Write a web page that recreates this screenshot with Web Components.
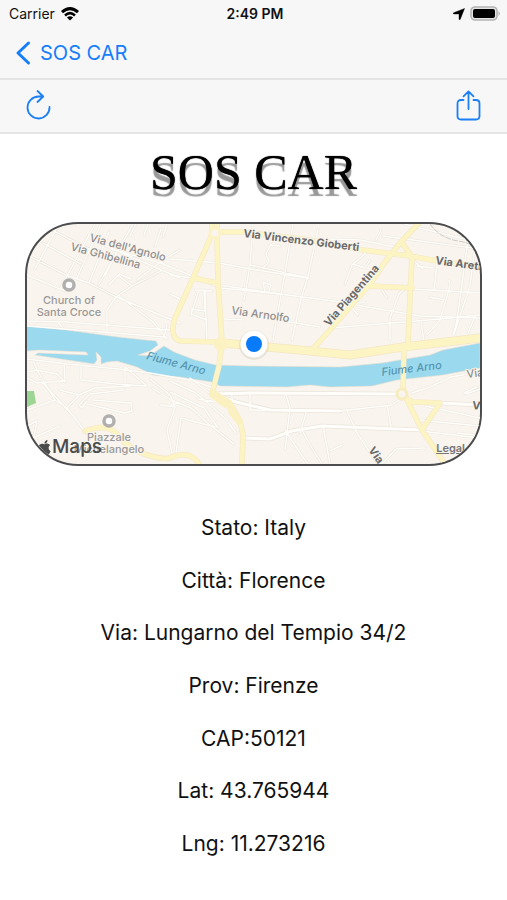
<!DOCTYPE html>
<html lang="it">
<head>
<meta charset="utf-8">
<meta name="viewport" content="width=device-width, initial-scale=1">
<title>SOS CAR</title>
<style>
  body { margin: 0; background: #fff; color: #111; font-family: Inter, "Liberation Sans", sans-serif; }
</style>
</head>
<body>
<sos-app></sos-app>

<template id="t-status">
  <style>
    :host { display: grid; grid-template-columns: 1fr auto 1fr; align-items: center; height: 27px; padding: 0 6px 0 9px; color: #111; font-size: 14px; line-height: 20px; }
    div { display: flex; align-items: center; gap: 6px; }
    .right { justify-content: flex-end; gap: 5px; }
    strong { font-weight: 600; }
    svg { display: block; }
  </style>
  <div><span>Carrier</span>
    <svg width="18" height="14" viewBox="0 0 18 14" fill="none" stroke="#000" stroke-width="3">
      <path d="M1 5.2Q9-2 17 5.2"/><path d="M4 8.4Q9 4 14 8.4" stroke-width="2.6"/><path d="M9 13.6 5.9 10.6Q9 8 12.1 10.6Z" fill="#000" stroke="none"/>
    </svg>
  </div>
  <strong>2:49 PM</strong>
  <div class="right">
    <svg width="12" height="12" viewBox="0 0 12 12"><path d="M11.6.4 7.2 11.4Q6.3 12.4 6 11V6H1Q-.4 5.700.600 4.800Z" fill="#000" stroke="#000" stroke-width=".4" stroke-linejoin="round"/></svg>
    <svg width="31" height="15" viewBox="0 0 31 15"><rect x="1" y="1" width="26" height="13" rx="4" fill="#e4e4e4" stroke="#b5b5b5" stroke-width="1.6"/><rect x="3" y="3" width="22" height="9" rx="2" fill="#000"/><path d="M28.500 5q2.500 2.500 0 5z" fill="#aaa"/></svg>
  </div>
</template>

<template id="t-nav">
  <style>
    :host { display: flex; align-items: center; height: 51px; padding: 0 15px; border-bottom: 2px solid #e5e5e6; }
    a { display: flex; align-items: center; gap: 9px; color: #147efb; text-decoration: none; font-size: 20px; line-height: 28px; }
  </style>
  <a href="#"><svg width="16" height="26" viewBox="0 0 16 26" fill="none" stroke="#147efb" stroke-width="3" stroke-linecap="round" stroke-linejoin="round"><path d="M13.500 3 3 13l10.500 10"/></svg><slot></slot></a>
</template>

<template id="t-tools">
  <style>
    :host { display: flex; align-items: center; justify-content: space-between; height: 52px; padding: 0 25px; border-bottom: 2px solid #e5e5e6; }
    button { display: block; padding: 0; border: 0; background: none; }
    svg { display: block; }
  </style>
  <button aria-label="Aggiorna"><svg width="27" height="32" viewBox="0 0 27 32" fill="none" stroke="#1b80f5" stroke-width="1.800" stroke-linecap="round" stroke-linejoin="round"><path d="M24.500 17A11 11 0 1 1 13.500 6.500H18M12.500 1l5.700 5.500-5.700 5.500"/></svg></button>
  <button aria-label="Condividi"><svg width="27" height="32" viewBox="0 0 27 32" fill="none" stroke="#1b80f5" stroke-width="1.800" stroke-linecap="round" stroke-linejoin="round"><path d="M8.500 10H6q-3.500 0-3.500 3.500V26Q2.500 29.500 6 29.500h15q3.500 0 3.500-3.500V13.500q0-3.500-3.500-3.500h-2.500M13.500 19V1.700M8.500 6.400l5-5 5 5"/></svg></button>
</template>

<template id="t-map">
  <style>
    :host { display: block; position: relative; box-sizing: border-box; border: 2px solid #4c4c4e; border-radius: 53px; overflow: hidden; background: #f9f5ee; }
    svg { display: block; width: 100%; height: auto; }
    .brand { position: absolute; left: 10px; bottom: 5px; display: flex; align-items: center; color: #4b4b4b; font-size: 19px; line-height: 24px; font-weight: 500; }
    .brand svg { width: 15px; height: 17px; }
    .legal { position: absolute; right: 15px; bottom: 8px; color: #77757a; font-size: 11px; line-height: 16px; font-weight: 600; }
    text { font-family: Inter, sans-serif; fill: #8f8e8d; font-size: 11px; font-weight: 500; stroke: #f9f5ee; stroke-width: 2px; paint-order: stroke; }
    .main { fill: #6a6a6a; font-weight: 700; }
    .poi { fill: #999; font-weight: 500; text-anchor: middle; }
    .water { fill: #5595ae; stroke: none; font-style: italic; font-weight: 500; }
  </style>
  <svg viewBox="27 224 453 240" fill="none" stroke-linejoin="round" stroke-linecap="round" role="img" aria-label="Mappa di Firenze">
    <defs>
      <g id="minor">
        <path d="M27 255 66 275 89 283 116 297 180 323M27 275 60 289 74 263 95 224M35 269 59 224M60 289 67 291M48 228 91 250M43 243 81 264M89 283 109 232M77 278 101 224M27 259 47 224M99 284 133 224M111 249 161 263 221 288 280 294 333 301 420 316 480 318M105 276 116 253M109 285 119 274 131 279M116 297 132 286 161 271M116 297 107 310 107 331M119 296 153 322 167 339M132 286 119 276M27 321 66 322 170 330M27 326 165 337M167 325 164 337M57 321 62 327M137 280 163 260 180 250M136 224 130 236M148 224 144 235M161 229 155 246M167 224 163 237M104 245 180 278"/>
        <path d="M170 259 219 263 251 269 307 278M219 285 280 294M253 224 250 265 244 300M293 224 284 278 273 340M318 230 308 276 301 299 292 340M271 244 266 254 269 262 263 268M270 245 280 246M263 282 271 285 269 291M263 282 265 292M170 275 193 278M195 290 212 291M199 290 191 314M204 290 205 311 191 309M205 292 207 342M191 314 207 320M170 294 180 299M250 265 309 278M224 319 244 320M273 319 320 327"/>
        <path d="M330 239 360 240 395 247M345 284 352 265 366 253M370 260 365 268 353 264M381 230 376 240M383 236 480 249M414 261 423 269M433 268 417 266M437 265 434 290M412 289 480 293M410 283 399 294 390 318 390 340M382 290 387 298M348 303 358 315M350 304 365 302M330 328 404 322 440 319 480 315M427 335 440 320 450 286 449 280M468 240 457 320 452 340M475 316 468 333M475 246 470 286 454 334M404 224 460 238 480 241M421 322 424 341M430 297 444 300"/>
        <path d="M27 359 67 364 119 369 150 373 195 381 213 388M27 372 37 370 34 362M37 370 57 374 65 382M64 364 65 381 37 383 27 378M81 367 81 380 116 384 147 386 125 367M125 367 125 383M37 370 55 400 67 408 87 434M55 400 27 410M67 408 79 395 60 390M79 395 95 388 130 386M87 401 82 408 79 405 90 394 124 390M87 404 125 413 132 411 131 403 92 400M42 382 73 416M150 379 170 395 175 407 167 430 172 453M175 407 160 405M171 405 180 403M152 388 171 400 191 408 210 425 234 444M27 426 37 421 32 445M42 450 35 437 60 426M87 434 106 438"/>
        <path d="M170 381 196 393 225 418 236 433M170 392 204 408 218 428M181 418 176 453M181 418 215 427M190 378 212 395M198 399 231 404M232 394 232 407M250 392 250 411M286 395 290 408 285 450M307 410 300 433M285 430 300 453 308 464M302 430 310 445 322 464M323 426 330 464M250 410 340 411 392 405 402 398M346 409 356 430M387 406 391 426M412 393 430 387 451 377 480 372M466 394 480 389M464 393 477 387M425 406 480 418M417 420 480 426M420 431 480 438M457 433 475 435M355 430 367 448 378 464M382 464 396 449 425 448M330 451 342 445"/>
      </g>
      <path id="major" d="M212 224v10L193 278 175 318Q169 337 180 341L220 342 253 345 300 350 350 355 403 347 480 338M217 224V235L218 282 222 342M193 278 217 283M218 232 242 232 303 239 363 250 410 256 437 261 480 266M418 224 400 243 385 262 370 284 330 330 310 352M402 243 412 257 410 298 408 343 404 350 403 390M370 286 412 288M222 342 219 366 212 394 230 403 240 421 243 435 242 464M407 400 422 430 445 464M404 397 413 402 440 403 422 430M85 431Q108 422 119 436T147 455 170 458Q190 449 199 464"/>
      <path id="avenue" d="M212 394 252 393 400 394M212 394 236 402 270 410 340 411M242 438 270 439 292 431 322 426 422 430M440 403 480 405"/>
    </defs>
    <use href="#minor" stroke="#ebe6de" stroke-width="2.600"/>
    <use href="#avenue" stroke="#e9e4db" stroke-width="4.600"/>
    <path d="M27 391 34 391 36 403 27 407Z" fill="#9dd594"/>
    <path d="M27 326 66 330 118 337 145 340 156 341 158 345 150 351 138 355 150 356 158 350 164 346 174 352 195 360 216 365 250 366 340 367 382 363 430 355 443 350 480 343V368L443 375 397 380 372 386 330 387 310 385 287 387 220 386 212 382 180 377 153 375 137 367 117 361 107 362 101 364 101 357 96 352 97 360 94 364 35 355 38 353 88 355 86 352 39 350 27 351Z" fill="#9bd9ef" stroke="#eadfce" stroke-width=".6"/>
    <use href="#minor" stroke="#fffefa" stroke-width="1.400"/>
    <use href="#avenue" stroke="#fffefa" stroke-width="3"/>
    <use href="#major" stroke="#f3e7c4" stroke-width="5.600"/>
    <path d="M222 343 300 350 350 355 403 347 480 338" stroke="#f3e7c4" stroke-width="9"/>
    <use href="#major" stroke="#fdf4c4" stroke-width="4.400"/>
    <path d="M222 343 300 350 350 355 403 347 480 338" stroke="#fdf4c4" stroke-width="7.400"/>
    <path d="M213 393 228 403 239 421 232 412M213 395 225 404" stroke="#fbf0c0" stroke-width="7"/>
    <circle cx="215" cy="233" r="5" fill="#f9f5ee" stroke="#fcf2c6" stroke-width="3"/>
    <circle cx="221" cy="344" r="5" fill="#fbf1c2" stroke="#fbf1c2" stroke-width="4"/>
    <circle cx="402" cy="394" r="5" fill="#f9f5ee" stroke="#f7ecbe" stroke-width="3"/>
    <path d="M430 224Q440 238 458 241T480 251" stroke="#cbc9c5" stroke-dasharray="5 2"/>
    <circle cx="69" cy="285" r="5" fill="#fff" stroke="#b2b0ae" stroke-width="3.500"/>
    <circle cx="109" cy="421" r="5" fill="#fff" stroke="#b2b0ae" stroke-width="3.500"/>
    <text transform="translate(89 241) rotate(15)">Via dell'Agnolo</text>
    <text transform="translate(70 250) rotate(15)">Via Ghibellina</text>
    <text class="main" transform="translate(243 237) rotate(7)">Via Vincenzo Gioberti</text>
    <text transform="translate(231 314) rotate(8)">Via Arnolfo</text>
    <text class="main" transform="translate(329 327) rotate(-49)">Via Piagentina</text>
    <text class="main" transform="translate(435 264) rotate(8)">Via Aretina</text>
    <text class="poi" x="69" y="304">Church of</text>
    <text class="poi" x="69" y="316">Santa Croce</text>
    <text class="water" transform="translate(146 359) rotate(15)">Fiume Arno</text>
    <text class="water" transform="translate(382 376) rotate(-7)">Fiume Arno</text>
    <text transform="translate(467 378) rotate(-7)">Via</text>
    <text class="main" transform="translate(472 409) rotate(5)">Via</text>
    <text class="main" transform="translate(368 450) rotate(55)">Via</text>
    <text class="poi" x="109" y="441">Piazzale</text>
    <text class="poi" x="109" y="453">Michelangelo</text>
    <circle cx="254" cy="345" r="15" fill="#78674a" opacity=".12"/>
    <circle cx="254" cy="344" r="13.500" fill="#fff"/>
    <circle cx="254" cy="344" r="8" fill="#087bfb"/>
  </svg>
  <div class="brand"><svg viewBox="0 0 24 24" preserveAspectRatio="xMidYMid meet"><path fill="#4b4b4b" d="M12.152 6.896c-.948 0-2.415-1.078-3.960-1.040-2.040.027-3.910 1.183-4.961 3.014-2.117 3.675-.546 9.103 1.519 12.090 1.013 1.454 2.208 3.090 3.792 3.039 1.520-.065 2.090-.987 3.935-.987 1.831 0 2.350.987 3.960.948 1.637-.026 2.676-1.480 3.676-2.948 1.156-1.688 1.636-3.325 1.662-3.415-.039-.013-3.182-1.221-3.220-4.857-.026-3.040 2.480-4.494 2.597-4.559-1.429-2.090-3.623-2.324-4.390-2.376-2-.156-3.675 1.090-4.610 1.090zM15.530 3.830c.843-1.012 1.400-2.427 1.245-3.830-1.207.052-2.662.805-3.532 1.818-.780.896-1.454 2.338-1.273 3.714 1.338.104 2.715-.688 3.559-1.701"/></svg><span>Maps</span></div>
  <a class="legal" href="#">Legal</a>
</template>

<template id="t-row">
  <style>:host { display: flex; align-items: center; justify-content: center; font-size: 21px; line-height: 28px; }</style>
  <slot></slot>
</template>

<template id="t-app">
  <style>
    :host { display: flex; flex-direction: column; min-height: 100vh; }
    header { background: #f7f7f7; }
    main { flex: 1; display: flex; flex-direction: column; padding: 8px 25px 30px; }
    h1 { margin: 0 0 20px; text-align: center; color: #000; font: 400 50px/60px "Liberation Serif", serif; text-shadow: 0 0 1px #000, 0 7px 1px #999; }
    section { flex: 1; display: grid; grid-auto-rows: 1fr; padding-top: 36px; }
  </style>
  <header>
    <status-bar></status-bar>
    <nav-bar>SOS CAR</nav-bar>
    <tool-bar></tool-bar>
  </header>
  <main>
    <h1>SOS CAR</h1>
    <location-map></location-map>
    <section>
      <info-row>Stato: Italy</info-row>
      <info-row>Città: Florence</info-row>
      <info-row>Via: Lungarno del Tempio 34/2</info-row>
      <info-row>Prov: Firenze</info-row>
      <info-row>CAP:50121</info-row>
      <info-row>Lat: 43.765944</info-row>
      <info-row>Lng: 11.273216</info-row>
    </section>
  </main>
</template>

<script>
  class TemplateElement extends HTMLElement {
    constructor() {
      super();
      const source = document.getElementById(this.constructor.template);
      this.attachShadow({ mode: "open" }).append(source.content.cloneNode(true));
    }
  }
  class StatusBar extends TemplateElement { static template = "t-status"; }
  class NavBar extends TemplateElement { static template = "t-nav"; }
  class ToolBar extends TemplateElement { static template = "t-tools"; }
  class LocationMap extends TemplateElement { static template = "t-map"; }
  class InfoRow extends TemplateElement { static template = "t-row"; }
  class SosApp extends TemplateElement { static template = "t-app"; }
  customElements.define("status-bar", StatusBar);
  customElements.define("nav-bar", NavBar);
  customElements.define("tool-bar", ToolBar);
  customElements.define("location-map", LocationMap);
  customElements.define("info-row", InfoRow);
  customElements.define("sos-app", SosApp);
</script>
</body>
</html>
